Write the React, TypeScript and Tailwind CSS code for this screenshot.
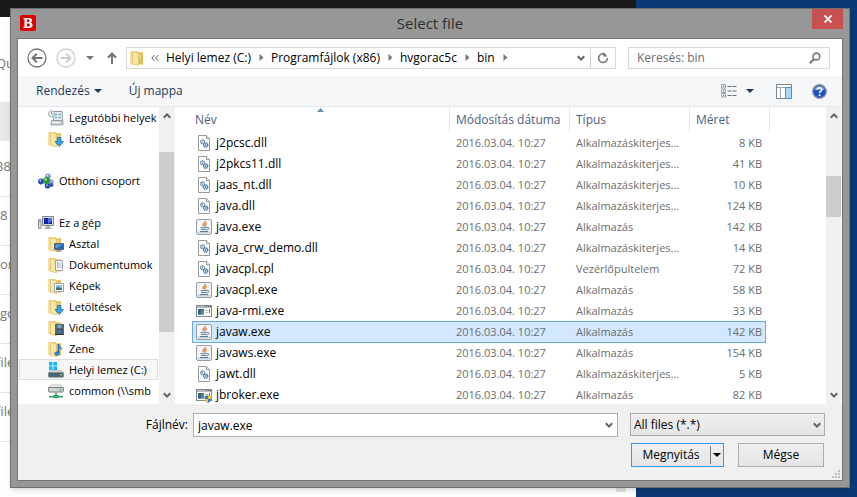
import React, { useState } from 'react';

type NavEntry = { label: string; icon: string; level: number } | null;

const NAV: NavEntry[] = [
    { label: 'Legutóbbi helyek', icon: 'recent', level: 2 },
    { label: 'Letöltések', icon: 'downloads', level: 2 },
    null,
    { label: 'Otthoni csoport', icon: 'homegroup', level: 1 },
    null,
    { label: 'Ez a gép', icon: 'computer', level: 1 },
    { label: 'Asztal', icon: 'desktop', level: 2 },
    { label: 'Dokumentumok', icon: 'documents', level: 2 },
    { label: 'Képek', icon: 'pictures', level: 2 },
    { label: 'Letöltések', icon: 'downloads', level: 2 },
    { label: 'Videók', icon: 'videos', level: 2 },
    { label: 'Zene', icon: 'music', level: 2 },
    { label: 'Helyi lemez (C:)', icon: 'disk', level: 2 },
    { label: 'common (\\\\smb', icon: 'network', level: 2 },
];

const FILES = [
    { name: 'j2pcsc.dll', icon: 'dll', type: 'Alkalmazáskiterjes...', size: '8 KB' },
    { name: 'j2pkcs11.dll', icon: 'dll', type: 'Alkalmazáskiterjes...', size: '41 KB' },
    { name: 'jaas_nt.dll', icon: 'dll', type: 'Alkalmazáskiterjes...', size: '10 KB' },
    { name: 'java.dll', icon: 'dll', type: 'Alkalmazáskiterjes...', size: '124 KB' },
    { name: 'java.exe', icon: 'java', type: 'Alkalmazás', size: '142 KB' },
    { name: 'java_crw_demo.dll', icon: 'dll', type: 'Alkalmazáskiterjes...', size: '14 KB' },
    { name: 'javacpl.cpl', icon: 'dll', type: 'Vezérlőpultelem', size: '72 KB' },
    { name: 'javacpl.exe', icon: 'java', type: 'Alkalmazás', size: '58 KB' },
    { name: 'java-rmi.exe', icon: 'app', type: 'Alkalmazás', size: '33 KB' },
    { name: 'javaw.exe', icon: 'java', type: 'Alkalmazás', size: '142 KB' },
    { name: 'javaws.exe', icon: 'java', type: 'Alkalmazás', size: '154 KB' },
    { name: 'jawt.dll', icon: 'dll', type: 'Alkalmazáskiterjes...', size: '5 KB' },
    { name: 'jbroker.exe', icon: 'appShield', type: 'Alkalmazás', size: '82 KB' },
];

const CRUMBS = ['Helyi lemez (C:)', 'Programfájlok (x86)', 'hvgorac5c', 'bin'];

const PAGE_ROWS = ['38', '8', 'on', 'go', 'file', 'file'];

const Folder = () => (
    <g>
        <path d="M.5 1h7v1.5h5.5V14.5H5L.5 14z" fill="#e9c866" />
        <path d="M8 2.5h5V14H8z" fill="#e3bd55" />
        <path d="M.5 1H6v12.5L.5 14z" fill="#f4de98" />
        <path d="M2.5 1.5L8.5 3v12.8l-6-1.6z" fill="#f8e6a6" stroke="#d8b75c" strokeWidth=".6" />
        <path d="M10 4v5" stroke="#f7e9b8" />
    </g>
);

const JavaCup = () => (
    <g>
        <rect x=".5" y=".5" width="15" height="15" rx="1.5" fill="#f4f6f8" stroke="#8f9fae" />
        <path d="M1.5 12.5h13v2h-13z" fill="#c3d0dc" />
        <path d="M9.5 2c.6 1.8-3.8 2.6-2 5M10.8 4.3c-2.4 1-1.6 2-2 3.5" fill="none" stroke="#ec7a2c" strokeWidth="1.4" />
        <path d="M4.5 8.7h6.5M5.2 10.5h5.3M4 12.5h8" fill="none" stroke="#5d7d9b" />
        <path d="M11 8.5c2.8-.4 2.4 2.2-.2 2.4" fill="none" stroke="#5d7d9b" />
    </g>
);

const AppWindow = () => (
    <g>
        <rect x=".5" y="2.5" width="15" height="11" fill="#fbfbfb" stroke="#85898d" />
        <path d="M1 3h14v2H1z" fill="#b4bbc2" />
        <path d="M10 3.5h1M12 3.5h1M14 3.5h1" stroke="#4c5a68" />
        <path d="M2 6h6v5.5H2z" fill="#3f7d83" />
        <path d="M2 6h3v5.5H2z" fill="#3b608f" />
        <path d="M5 8h3v3.5H5z" fill="#4e9a74" />
        <path d="M9 7.5h3M9 9.5h3" stroke="#bcc2c8" />
        <path d="M13.5 6v4" stroke="#6b747c" />
    </g>
);

const FileIcon = ({ name }: { name: string }) => (
    <svg className="w-4 h-4 shrink-0" viewBox="0 0 16 16">
        {name === 'recent' && (
            <g>
                <path d="M5 1.5h9l.5 9H5.5z" fill="#e9eef2" stroke="#8f979e" />
                <path d="M3.5 10.5h11.5v4.5H3z" fill="#c6cbcf" stroke="#8f969c" strokeWidth=".8" />
                <path d="M7 4.5h2M10.5 4.5h2M7 7.5h2M10.5 7.5h2" stroke="#56a8cf" strokeWidth="1.5" />
                <path d="M4 12.5h8" stroke="#fff" />
                <circle cx="3.5" cy="3.8" r="3" fill="#f3f5f6" stroke="#9ca2a7" />
                <path d="M3.5 2v2h1.5" fill="none" stroke="#6a7177" strokeWidth=".8" />
            </g>
        )}
        {['downloads', 'desktop', 'documents', 'pictures', 'videos', 'music'].includes(name) && <Folder />}
        {name === 'downloads' && <path d="M9.5 6.5h3.5v4h2.5l-4.2 5-4.3-5h2.5z" fill="#38a6e8" stroke="#1c6fb5" strokeWidth=".8" />}
        {name === 'desktop' && (
            <g>
                <path d="M6.5 7.5h9v6h-9z" fill="#2567b8" stroke="#59636e" />
                <path d="M7.5 8.5h7l-7 4z" fill="#5aa2e0" />
                <path d="M8.5 15h5" stroke="#59636e" />
            </g>
        )}
        {name === 'documents' && (
            <g>
                <path d="M7.5 3.5h7v10h-7z" fill="#fff" stroke="#99a4b0" />
                <path d="M9 6h1.5M9 8h1.5M9 10h1.5" stroke="#356fae" />
                <path d="M11.5 6h2M11.5 8h2M11.5 10h2" stroke="#9cabb8" />
            </g>
        )}
        {name === 'pictures' && (
            <g>
                <path d="M6.5 5.5h9v8h-9z" fill="#fff" stroke="#9aa2aa" />
                <path d="M8 7h6v5H8z" fill="#8cc3e0" />
                <path d="M8 9.8l2-.8 4 1.5V12H8z" fill="#3e766d" />
            </g>
        )}
        {name === 'videos' && (
            <g>
                <path d="M7 4h9v11H7z" fill="#34383d" />
                <path d="M9.3 4.5h4.4v4H9.3z" fill="#6faad2" />
                <path d="M9.3 9.7h4.4v4H9.3z" fill="#3c7fb5" />
                <path d="M8 4.5v10M15 4.5v10" stroke="#e6e6e6" strokeDasharray="1 1" />
            </g>
        )}
        {name === 'music' && (
            <g>
                <path d="M10.5 3v9" stroke="#1d6dbb" strokeWidth="1.6" />
                <path d="M10.5 3c1 2.6 4.2 2.6 3.6 6.6-.5-1.8-2-2.2-3.6-2.6z" fill="#2d8ad6" />
                <ellipse cx="9" cy="12.6" rx="2.4" ry="1.9" fill="#2d8ad6" stroke="#1b5fa6" strokeWidth=".5" />
            </g>
        )}
        {name === 'homegroup' && (
            <g>
                <circle cx="10" cy="3.2" r="2.7" fill="#6e93cf" />
                <circle cx="3" cy="8.5" r="2.9" fill="#2846b0" />
                <circle cx="13" cy="9" r="2.8" fill="#93abdc" />
                <circle cx="9.5" cy="12.8" r="2.8" fill="#2b49ad" />
                <circle cx="13.5" cy="12" r="2" fill="#3c57b5" />
                <circle cx="8.5" cy="7.6" r="3.5" fill="#259a35" />
                <circle cx="7.7" cy="6.5" r="1.3" fill="#a9e39c" />
                <circle cx="9.5" cy="2.4" r="1" fill="#dfe9fa" />
                <circle cx="2.4" cy="7.6" r="1" fill="#c0d0f4" />
                <circle cx="9" cy="12.2" r=".9" fill="#a6b9ee" />
            </g>
        )}
        {name === 'computer' && (
            <g>
                <path d="M.5 4.5h2.5v9H.5z" fill="#d8dcdf" stroke="#8b9196" />
                <path d="M1 6.5h1.5" stroke="#48b04b" />
                <path d="M4.5 1.5h11v9h-11z" fill="#d4d9dd" stroke="#7f868c" />
                <path d="M6 3h8v6H6z" fill="#1524a5" />
                <path d="M10 3h4v3l-4 3z" fill="#4f72e0" />
                <path d="M8.5 11h3v1.5h2v1.5h-7v-1.5h2z" fill="#9fa6ac" />
            </g>
        )}
        {name === 'disk' && (
            <g>
                <path d="M1 0h3.5v3.5H1zM5.3 0h3.7v3.5H5.3zM1 4.3h3.5V8H1zM5.3 4.3h3.7V8H5.3z" fill="#10bdf3" />
                <path d="M2.5 8.5h11l2 2.5H.5z" fill="#d9dddf" stroke="#9a9fa3" strokeWidth=".6" />
                <rect x=".4" y="10.6" width="15.2" height="4.6" rx="1.2" fill="#4f6068" stroke="#7d8589" strokeWidth=".7" />
                <path d="M2 12.8h8" stroke="#39717c" strokeWidth="1.6" />
                <path d="M12 12.8h2" stroke="#74e36e" strokeWidth="1.6" />
            </g>
        )}
        {name === 'network' && (
            <g>
                <path d="M3 2h10l2.5 3H.5z" fill="#f0f1f2" stroke="#9b9fa2" strokeWidth=".6" />
                <rect x=".5" y="4.5" width="15" height="4.5" rx="1.3" fill="#d1d4d6" stroke="#73787c" />
                <path d="M11.5 6.8h2" stroke="#34b93c" strokeWidth="1.4" />
                <path d="M8 9.5v4M1 13.7h14" stroke="#2fa866" strokeWidth="1.6" />
                <path d="M5.5 12h5v3.2h-5z" fill="#2fa866" />
            </g>
        )}
        {name === 'dll' && (
            <g>
                <path d="M2.5.5h8l3 3v12h-11z" fill="#fff" stroke="#9a9a9a" />
                <path d="M10.5.5v3h3" fill="#eee" stroke="#9a9a9a" />
                <circle cx="6.6" cy="6.8" r="2" fill="#e7f0f7" stroke="#54799f" strokeWidth="1.2" strokeDasharray="1.2 .4" />
                <circle cx="9.6" cy="10" r="2.2" fill="#cfdfec" stroke="#3c6a96" strokeWidth="1.2" strokeDasharray="1.2 .4" />
                <circle cx="6.6" cy="6.8" r=".6" fill="#416f9c" />
                <circle cx="9.6" cy="10" r=".7" fill="#30618f" />
            </g>
        )}
        {name === 'java' && <JavaCup />}
        {(name === 'app' || name === 'appShield') && <AppWindow />}
        {name === 'appShield' && (
            <g>
                <path d="M8.5 9.2c1.6 0 2.6-.5 3.5-1.2.9.7 1.9 1.2 3.5 1.2 0 3.4-.9 5.6-3.5 6.8-2.6-1.2-3.5-3.4-3.5-6.8z" fill="#2f7bd0" />
                <path d="M12 8c.9.7 1.9 1.2 3.5 1.2 0 1 0 1.9-.3 2.8H12zM8.8 12H12v4c-1.8-.8-2.8-2.1-3.2-4z" fill="#f3c62f" />
            </g>
        )}
    </svg>
);

const Chevron = ({ up = false, className = '' }: { up?: boolean; className?: string }) => (
    <svg className={`w-2 h-2 shrink-0 ${className}`} viewBox="0 0 8 8">
        <path d={up ? 'M.8 5.8L4 2.4l3.2 3.4' : 'M.8 2.2L4 5.6l3.2-3.4'} fill="none" stroke="#606060" strokeWidth="2" />
    </svg>
);

const DownTriangle = ({ className }: { className: string }) => (
    <svg className={`w-2 h-1 shrink-0 ${className}`} viewBox="0 0 8 4">
        <path d="M0 0h8L4 4z" fill="currentColor" />
    </svg>
);

const ScrollBar = ({ before, thumb }: { before: string; thumb: string }) => (
    <div className="w-[15px] shrink-0 bg-[#f0f0f0] flex flex-col items-center">
        <button aria-label="Fel" className="h-[18px] w-full flex items-center justify-center"><Chevron up /></button>
        <div className={before} />
        <div className={`w-full bg-[#cdcdcd] ${thumb}`} />
        <button aria-label="Le" className="mt-auto h-[18px] w-full flex items-center justify-center"><Chevron /></button>
    </div>
);

const PageBehind = () => (
    <div className="absolute inset-0 flex bg-[#0a3974] overflow-hidden">
        <div className="flex-1 bg-white text-[13px] leading-5 text-[#777] flex flex-col">
            <div className="h-[17px] bg-[#191919]" />
            <div className="h-[85px] pt-9 -ml-1">Qu</div>
            <div className="h-[39px] mb-[7px] bg-[#e8e8e8]" />
            {PAGE_ROWS.map((text, i) => (
                <div key={i} className="h-[49px] border-b border-[#e5e5e5] pt-2">
                    <span className={text === 'file' || text === '38' ? '-ml-1' : ''}>{text}</span>
                </div>
            ))}
            <div className="mt-auto mb-[5px] mr-[10px] self-end w-[10px] h-[5px] bg-[#e3e3e3]" />
        </div>
        <div className="w-[221px]" />
    </div>
);

const AddressBar = () => (
    <div className="h-[37px] pl-[9px] pr-3 flex items-center text-black">
        <button aria-label="Vissza">
            <svg className="w-5 h-5" viewBox="0 0 20 20" fill="none" stroke="#757575">
                <circle cx="10" cy="10" r="9" strokeWidth="1.3" />
                <path d="M15.5 10H6M9.8 5.8L5.5 10l4.3 4.2" strokeWidth="2" />
            </svg>
        </button>
        <button aria-label="Előre" className="ml-[9px]">
            <svg className="w-5 h-5" viewBox="0 0 20 20" fill="none" stroke="#cdcdcd">
                <circle cx="10" cy="10" r="9" strokeWidth="1.3" />
                <path d="M4.5 10H14M10.2 5.8l4.3 4.2-4.3 4.2" strokeWidth="2" />
            </svg>
        </button>
        <button aria-label="Előzmények" className="ml-[10px]"><DownTriangle className="text-[#777]" /></button>
        <button aria-label="Fel egy szinttel" className="ml-3">
            <svg className="w-3 h-3" viewBox="0 0 12 12" fill="none" stroke="#757575" strokeWidth="2">
                <path d="M6 12V1.5M2 5.8l4-4.3 4 4.3" />
            </svg>
        </button>
        <div className="ml-2 h-[22px] flex-1 border border-[#d9d9d9] flex items-center">
            <svg className="ml-[3px] w-4 h-4 shrink-0" viewBox="0 0 16 16"><Folder /></svg>
            <svg className="ml-[5px] w-2 h-2 shrink-0" viewBox="0 0 8 8" fill="none" stroke="#666">
                <path d="M3.5 1L.8 4l2.7 3M7.3 1L4.6 4l2.7 3" />
            </svg>
            {CRUMBS.map((crumb) => (
                <div key={crumb} className="flex items-center ml-[7px]">
                    <button className="whitespace-nowrap">{crumb}</button>
                    <svg className="ml-2 w-[5px] h-[7px]" viewBox="0 0 5 7"><path d="M.5 0L4.5 3.5.5 7z" fill="#777" /></svg>
                </div>
            ))}
            <button aria-label="Előző helyek" className="ml-auto mr-[5px]"><Chevron /></button>
            <button aria-label="Frissítés" className="w-[25px] h-full border-l border-[#d9d9d9] flex items-center justify-center">
                <svg className="w-3 h-3" viewBox="0 0 12 12" fill="none" stroke="#777" strokeWidth="1.6">
                    <path d="M8.2 2.3A4.4 4.4 0 1 0 10.4 6" />
                    <path d="M6.2 0v4.6h4.4" strokeWidth="0" fill="#777" />
                </svg>
            </button>
        </div>
        <div className="ml-3 w-[202px] h-[22px] border border-[#d9d9d9] flex items-center">
            <input aria-label="Keresés" placeholder="Keresés: bin" className="flex-1 min-w-0 pl-2 outline-none placeholder:text-[#6d6d6d]" />
            <svg className="mr-2 w-3 h-3 shrink-0" viewBox="0 0 12 12" fill="none" stroke="#777">
                <circle cx="7.4" cy="4.5" r="3.4" strokeWidth="1.6" />
                <path d="M5 7L.8 11.3" strokeWidth="2" />
            </svg>
        </div>
    </div>
);

const Toolbar = () => (
    <div className="h-[31px] pl-[18px] pr-[15px] bg-[#f5f6f7] border-b border-[#e3e8ee] flex items-center text-[#1e395b]">
        <button className="flex items-center">
            Rendezés <DownTriangle className="ml-1" />
        </button>
        <button className="ml-[27px]">Új mappa</button>
        <button aria-label="Nézet" className="ml-auto">
            <svg className="w-4 h-[14px]" viewBox="0 0 16 14">
                <path d="M.5.5h4v3.5h-4zM.5 5h4v3.5h-4zM.5 9.5h4V13h-4z" fill="#fff" stroke="#9aa0a8" />
                <path d="M2 2.3h1.3M2 11.3h1.3" stroke="#3a6ca8" strokeWidth="1.3" />
                <path d="M2 6.8h1.3" stroke="#c43c2c" strokeWidth="1.3" />
                <path d="M6.5 2.5h4M11.5 2.5h4M6.5 7h4M11.5 7h4M6.5 11.5h4M11.5 11.5h4" stroke="#687078" />
            </svg>
        </button>
        <button aria-label="További beállítások" className="ml-[9px]"><DownTriangle className="" /></button>
        <button aria-label="Betekintő ablaktábla" className="ml-[22px]">
            <svg className="w-4 h-[15px]" viewBox="0 0 16 15">
                <path d="M.5.5h15v14H.5z" fill="#fff" stroke="#7d858d" />
                <path d="M1 3.5h14M4.5 3v11" stroke="#9aa1a8" />
                <path d="M9.5 3.5h6v11h-6z" fill="#a9d8fb" stroke="#3f96dd" />
            </svg>
        </button>
        <button aria-label="Súgó" className="ml-5">
            <svg className="w-[15px] h-[15px]" viewBox="0 0 15 15">
                <circle cx="7.5" cy="7.5" r="6.8" fill="#2350bd" stroke="#8c93a6" strokeWidth="1.3" />
                <path d="M2.3 6a5.4 5.4 0 0 1 10.4 0z" fill="#6f95e2" />
                <path d="M5.2 5.6c.2-2.6 4.8-2.4 4.6.1-.1 1.5-2.1 1.6-2.2 3.3" fill="none" stroke="#fff" strokeWidth="1.6" />
                <circle cx="7.6" cy="11.2" r="1" fill="#fff" />
            </svg>
        </button>
    </div>
);

const NavPane = () => (
    <nav className="w-[141px] shrink-0 overflow-hidden text-black text-[11px]">
        {NAV.map((item, i) =>
            item ? (
                <a
                    key={i}
                    href="#"
                    className={`h-[21px] ml-px mr-px flex items-center overflow-hidden whitespace-nowrap border ${
                        item.level === 1 ? 'pl-[18px] gap-[5px]' : 'pl-7 gap-[5px]'
                    } ${item.icon === 'disk' ? 'bg-[#f7f7f7] border-[#dedede]' : 'border-transparent'}`}
                >
                    <FileIcon name={item.icon} />
                    {item.label}
                </a>
            ) : (
                <div key={i} className="h-[21px]" />
            )
        )}
    </nav>
);

const FileList = ({ selected, onSelect }: { selected: string; onSelect: (name: string) => void }) => (
    <div className="flex-1 min-w-0 border-l border-[#f2f2f2] pl-[17px] overflow-hidden">
        <table className="block mr-14 text-left">
            <thead className="block">
                <tr className="flex h-[25px] items-stretch text-[#4c607a] leading-[25px]">
                    <th className="relative flex-1 font-normal pl-[3px] border-r border-[#e2ebf4]">
                        Név
                        <svg className="absolute top-px left-1/2 -ml-1 w-[7px] h-1" viewBox="0 0 7 4">
                            <path d="M0 4l3.5-4L7 4z" fill="#5b93b4" />
                        </svg>
                    </th>
                    <th className="w-[120px] font-normal pl-[6px] border-r border-[#e2ebf4]">Módosítás dátuma</th>
                    <th className="w-[120px] font-normal pl-[6px] border-r border-[#e2ebf4]">Típus</th>
                    <th className="w-[80px] font-normal pl-[6px] border-r border-[#e2ebf4]">Méret</th>
                </tr>
            </thead>
            <tbody className="block mr-1">
                {FILES.map((file) => (
                    <tr
                        key={file.name}
                        onClick={() => onSelect(file.name)}
                        className={`flex items-center cursor-default text-[11px] text-[#6d6d6d] ${
                            selected === file.name
                                ? 'h-[22px] -mb-px bg-[#d1e8ff] outline outline-1 -outline-offset-1 outline-[#66a7e8]'
                                : 'h-[21px]'
                        }`}
                    >
                        <td className="flex-1 flex items-center gap-1 pl-1 text-[12px] text-black">
                            <FileIcon name={file.icon} />
                            {file.name}
                        </td>
                        <td className="w-[120px] pl-[6px]">2016.03.04. 10:27</td>
                        <td className="w-[120px] pl-[6px] whitespace-nowrap">{file.type}</td>
                        <td className="w-[76px] pr-1 text-right">{file.size}</td>
                    </tr>
                ))}
            </tbody>
        </table>
    </div>
);

export default function App() {
    const [fileName, setFileName] = useState('javaw.exe');

    return (
        <div className="relative min-h-screen flex flex-col overflow-hidden font-['Open_Sans',sans-serif] text-[12px] leading-4">
            <PageBehind />

            <div className="relative mt-2 ml-[10px] mr-[7px] mb-[9px] border border-[#707070] bg-[#979797] px-[6px] pb-[6px] shadow-md">
                {/* Title bar */}
                <div className="relative h-[29px] flex items-start justify-between pl-[3px]">
                    <svg className="mt-[6px] w-4 h-4" viewBox="0 0 16 16">
                        <rect width="16" height="16" rx="2" fill="#dc0000" />
                        <path
                            d="M3.5 3h5.6c3.5 0 3.9 3.6 1.6 4.7 3 1 2.4 5.3-1.4 5.3H3.5v-1.3h1V4.3h-1zM6.8 4.6v2.3h1.5c1.7 0 1.7-2.3 0-2.3zM6.8 8.6v2.8h1.7c2 0 2-2.8 0-2.8z"
                            fill="#fff"
                            fillRule="evenodd"
                        />
                    </svg>
                    <h1 className="absolute inset-x-0 top-0 text-center text-[15px] leading-[29px] text-[#2e2e2e] pointer-events-none">Select file</h1>
                    <button aria-label="Bezárás" className="w-[31px] h-5 bg-[#c75050] flex items-center justify-center">
                        <svg className="w-2 h-2" viewBox="0 0 8 8"><path d="M.5.5l7 7M7.5.5l-7 7" stroke="#fff" strokeWidth="1.8" /></svg>
                    </button>
                </div>

                <div className="border border-[#757575] bg-white">
                    <AddressBar />
                    <Toolbar />

                    <div className="flex h-[297px] pr-px">
                        <NavPane />
                        <ScrollBar before="h-[27px]" thumb="h-[180px]" />
                        <FileList selected={fileName} onSelect={setFileName} />
                        <ScrollBar before="h-[51px]" thumb="h-[41px]" />
                    </div>

                    {/* File name, filter and actions */}
                    <div className="relative h-[76px] bg-[#f0f0f0] pt-[9px] pr-[17px] text-black">
                        <div className="flex items-start">
                            <label htmlFor="file-name" className="w-[170px] text-right leading-6">Fájlnév:</label>
                            <div className="ml-[5px] flex-1 h-6 bg-white border border-[#abadb3] flex items-center">
                                <input
                                    id="file-name"
                                    value={fileName}
                                    onChange={(e) => setFileName(e.target.value)}
                                    className="flex-1 min-w-0 h-full pt-px pl-1 outline-none"
                                />
                                <Chevron className="mr-1" />
                            </div>
                            <div className="relative ml-3 w-[195px]">
                                <select aria-label="Fájltípus" className="appearance-none w-full h-[23px] pl-[3px] border border-[#acacac] bg-linear-to-b from-[#efefef] to-[#e5e5e5]">
                                    <option>All files (*.*)</option>
                                </select>
                                <Chevron className="absolute right-1 top-2 pointer-events-none" />
                            </div>
                        </div>
                        <div className="mt-[6px] pr-px flex justify-end gap-[14px]">
                            <div className="w-[93px] h-6 border border-[#3399ff] bg-linear-to-b from-[#efefef] to-[#e5e5e5] flex items-center">
                                <button className="flex-1">Megnyitás</button>
                                <button aria-label="Megnyitási lehetőségek" className="h-[18px] pl-[2px] pr-[2px] border-l border-[#777] flex items-center">
                                    <DownTriangle className="text-black" />
                                </button>
                            </div>
                            <button className="w-[86px] h-6 border border-[#acacac] bg-linear-to-b from-[#efefef] to-[#e5e5e5]">Mégse</button>
                        </div>
                        <svg className="absolute right-[2px] bottom-[2px] w-2 h-2" viewBox="0 0 8 8" fill="#bdbdbd">
                            <path d="M6 0h2v2H6zM3 3h2v2H3zM6 3h2v2H6zM0 6h2v2H0zM3 6h2v2H3zM6 6h2v2H6z" />
                        </svg>
                    </div>
                </div>
            </div>
        </div>
    );
}
